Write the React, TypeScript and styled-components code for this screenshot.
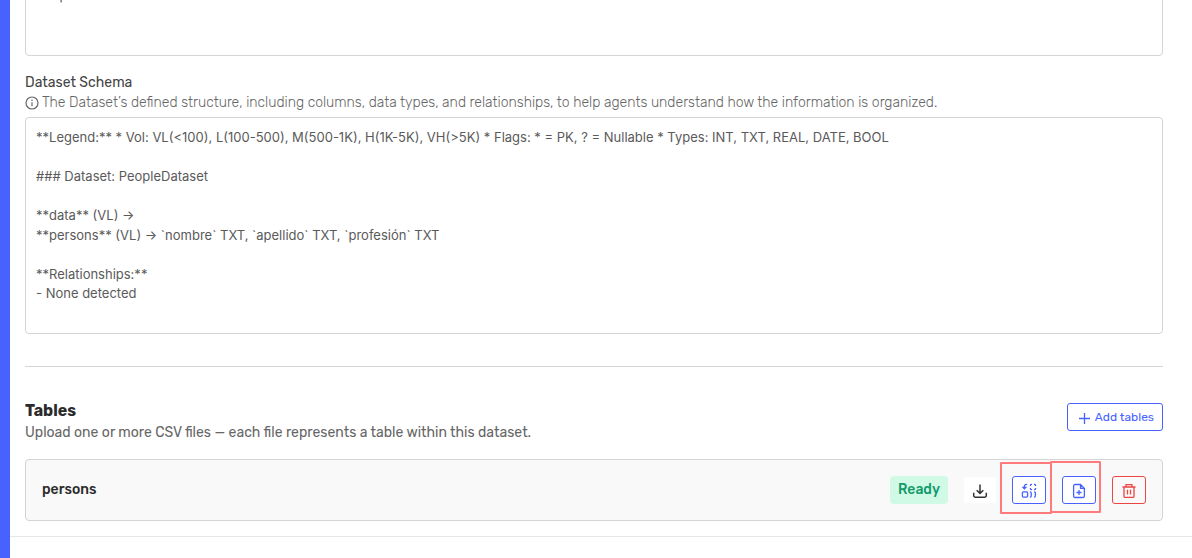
import React from "react";
import styled, { createGlobalStyle } from "styled-components";

const GlobalStyle = createGlobalStyle`
  *, *::before, *::after { box-sizing: border-box; }
  body { margin: 0; background: #fff; font-family: Rubik, Inter, "Liberation Sans", sans-serif; color: #333; }
`;

const Page = styled.div`
  display: flow-root;
  min-height: 100vh;
  border-left: 10px solid #4762ff;
`;

const Form = styled.main`
  margin-top: -25px;
  padding: 0 29px 15px 15px;
  border-bottom: 1px solid #e5e7eb;
`;

const Field = styled.div`
  display: flex;
  flex-direction: column;
`;

const TextBox = styled.textarea`
  display: block;
  width: 100%;
  padding: 10px;
  border: 1px solid #d4d4d4;
  border-radius: 4px;
  background: #fff;
  color: #5a5a5a;
  font-family: Inter, "Liberation Sans", sans-serif;
  font-size: 13px;
  line-height: 1.5;
  resize: none;
  overflow: hidden;
`;

const DescriptionBox = styled(TextBox)`
  height: 81px;
`;

const SchemaBox = styled(TextBox)`
  height: 217px;
`;

const Label = styled.label`
  margin-top: 17px;
  font-size: 14px;
  line-height: 20px;
  color: #444;
`;

const Hint = styled.p`
  display: flex;
  align-items: center;
  gap: 3px;
  margin: 0 0 4px;
  font-size: 14px;
  font-weight: 300;
  line-height: 20px;
  color: #666;
`;

const Divider = styled.hr`
  height: 1px;
  margin: 32px 0;
  border: 0;
  background: #d4d4d4;
`;

const SectionHeader = styled.header`
  display: flex;
  justify-content: space-between;
  align-items: flex-start;
  margin-bottom: 16px;
`;

const Title = styled.h2`
  margin: 0;
  font-size: 16px;
  font-weight: 700;
  line-height: 24px;
  color: #2b2b2b;
`;

const Subtitle = styled.p`
  margin: 0;
  font-size: 14px;
  line-height: 20px;
  color: #666;
`;

const AddButton = styled.button`
  display: flex;
  align-items: center;
  gap: 3px;
  height: 28px;
  margin-top: 4px;
  padding: 0 8px;
  border: 1px solid #4762ff;
  border-radius: 3px;
  background: #fff;
  color: #4762ff;
  font: inherit;
  font-size: 12px;
`;

const TableRow = styled.section`
  display: flex;
  align-items: center;
  justify-content: space-between;
  height: 62px;
  padding: 0 16px;
  border: 1px solid #d4d4d4;
  border-radius: 4px;
  background: #f9f9f9;
`;

const TableName = styled.h3`
  margin: 0;
  font-size: 14px;
  font-weight: 500;
  line-height: 20px;
  color: #2b2b2b;
`;

const Actions = styled.div`
  display: flex;
  align-items: center;
  gap: 16px;
`;

const Status = styled.span`
  height: 28px;
  padding: 0 8px;
  border-radius: 4px;
  background: #d0fae5;
  color: #129a6c;
  font-size: 14px;
  font-weight: 500;
  line-height: 28px;
`;

const IconButton = styled.button<{ $tone: string; $fill?: string }>`
  display: flex;
  align-items: center;
  justify-content: center;
  width: 34px;
  height: 28px;
  padding: 2px 0 0;
  border: 1px solid ${(p) => p.$tone};
  border-radius: 3px;
  background: ${(p) => p.$fill ?? "#fff"};
  color: ${(p) => p.$tone};
`;

const DownloadButton = styled(IconButton)`
  width: 32px;
  height: 26px;
  border: 0;
`;

const Marked = styled.div`
  position: relative;
  &::after {
    content: "";
    position: absolute;
    inset: -14px -6px -10px -12px;
    border: 2px solid #ff7b7b;
    border-radius: 1px;
    pointer-events: none;
  }
`;

const MarkedNarrow = styled(Marked)`
  &::after { inset: -15px -5px -9px -12px; }
`;

const Icon = styled.svg.attrs({ fill: "none", stroke: "currentColor", "aria-hidden": true })`
  display: block;
  flex: none;
`;

const schema = `**Legend:** * Vol: VL(<100), L(100-500), M(500-1K), H(1K-5K), VH(>5K) * Flags: * = PK, ? = Nullable * Types: INT, TXT, REAL, DATE, BOOL

### Dataset: PeopleDataset

**data** (VL) →
**persons** (VL) → \`nombre\` TXT, \`apellido\` TXT, \`profesión\` TXT

**Relationships:**
- None detected`;

export default function App() {
  return (
    <>
      <GlobalStyle />
      <Page>
        <Form>
          <DescriptionBox aria-label="Dataset description" defaultValue="People Dataset" spellCheck={false} />
          <Field>
            <Label htmlFor="schema">Dataset Schema</Label>
            <Hint>
              <Icon width="14" height="14" viewBox="0 0 14 14" strokeWidth="1.2">
                <circle cx="7" cy="7" r="6" />
                <path d="M7 6.2v4M7 3.6v1.4" />
              </Icon>
              The Dataset’s defined structure, including columns, data types, and relationships, to help agents understand how the information is organized.
            </Hint>
            <SchemaBox id="schema" defaultValue={schema} spellCheck={false} />
          </Field>
          <Divider />
          <SectionHeader>
            <div>
              <Title>Tables</Title>
              <Subtitle>Upload one or more CSV files — each file represents a table within this dataset.</Subtitle>
            </div>
            <AddButton type="button">
              <Icon width="16" height="16" viewBox="0 0 16 16" strokeWidth="1.3">
                <path d="M8.5 4v11M3 9.5h11" />
              </Icon>
              Add tables
            </AddButton>
          </SectionHeader>
          <TableRow>
            <TableName>persons</TableName>
            <Actions>
              <Status>Ready</Status>
              <DownloadButton type="button" aria-label="Download" $tone="#333">
                <Icon width="16" height="16" viewBox="0 0 16 16" strokeWidth="1.5">
                  <path d="M8 1.5v8.8M4.7 7.2 8 10.5l3.3-3.3M1.7 9.8v2.6a1.8 1.8 0 0 0 1.8 1.8h9a1.8 1.8 0 0 0 1.8-1.8V9.8" />
                </Icon>
              </DownloadButton>
              <Marked>
                <IconButton type="button" aria-label="Replace table" $tone="#4762ff">
                  <Icon width="16" height="16" viewBox="0 0 16 16" strokeWidth="1.3">
                    <rect x="1.4" y="8.9" width="5.2" height="5.2" rx="1" />
                    <path d="M6.2 1.4H5.4a2 2 0 0 0-2 2v2" />
                    <path d="M1.2 4h4.4L3.4 6.4z" fill="currentColor" strokeWidth="0.6" />
                    <path d="M9.4 3V2.4a1 1 0 0 1 1-1h.6M13 1.4h.6a1 1 0 0 1 1 1V3M14.6 5v.6a1 1 0 0 1-1 1H13M11 6.6h-.6a1 1 0 0 1-1-1V5" />
                    <path d="M8.8 8.9h.4a1 1 0 0 1 1 1v3.2a1 1 0 0 1-1 1h-.4M13 8.9h.4a1 1 0 0 1 1 1v3.2a1 1 0 0 1-1 1H13" />
                  </Icon>
                </IconButton>
              </Marked>
              <MarkedNarrow>
                <IconButton type="button" aria-label="Add file" $tone="#4762ff">
                  <Icon width="16" height="16" viewBox="0 0 16 16" strokeWidth="1.3">
                    <path d="M9.5 1.5H4A1.4 1.4 0 0 0 2.6 2.9v10.2A1.4 1.4 0 0 0 4 14.5h8a1.4 1.4 0 0 0 1.4-1.4V5.4zM9.5 1.5v3.9h3.9M8 7v5M5.5 9.5h5" />
                  </Icon>
                </IconButton>
              </MarkedNarrow>
              <IconButton type="button" aria-label="Delete table" $tone="#ee4444" $fill="#f9f9f9">
                <Icon width="16" height="16" viewBox="0 0 16 16" strokeWidth="1.3">
                  <path d="M1.5 4h13M5 4V1.6h6V4M3 4v9.2a1.2 1.2 0 0 0 1.2 1.2h7.6a1.2 1.2 0 0 0 1.2-1.2V4M6.5 6.8v4.6M9.5 6.8v4.6" />
                </Icon>
              </IconButton>
            </Actions>
          </TableRow>
        </Form>
      </Page>
    </>
  );
}
